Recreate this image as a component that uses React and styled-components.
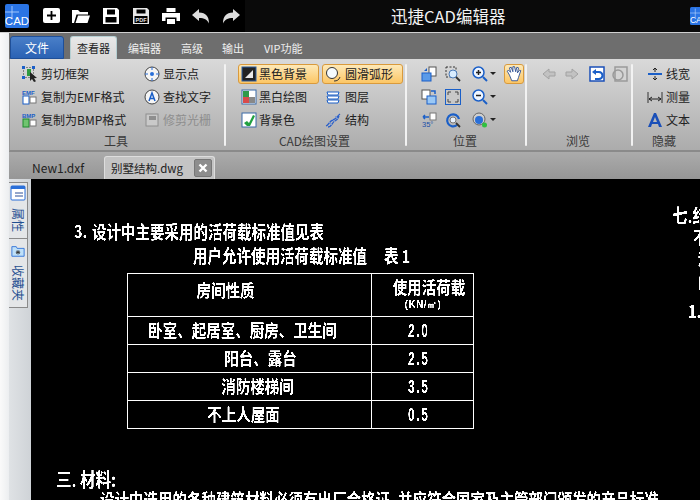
import React from "react";
import styled, { createGlobalStyle } from "styled-components";

const GlobalStyle = createGlobalStyle`
	html, body {
		margin: 0;
		padding: 0;
		background: #000;
	}
	body {
		font-family: "Noto Sans CJK SC", "Liberation Sans", sans-serif;
	}
`;

const Window = styled.div`
	width: 700px;
	height: 500px;
	overflow: hidden;
	display: flex;
	flex-direction: column;
	background: #000;
`;

const TitleBar = styled.div`
	height: 32px;
	flex: none;
	display: flex;
	align-items: center;
	background: #0a0a0a;
	border-bottom: 1px solid #d0d0d0;
	overflow: hidden;
`;

const QuickAccess = styled.div`
	width: 245px;
	height: 100%;
	flex: none;
	display: flex;
	align-items: center;
	background: #000;
	padding-left: 5px;
	box-sizing: border-box;
`;

const Logo = styled.div`
	width: 24px;
	height: 24px;
	margin-right: 13px;
	flex: none;
	svg {
		display: block;
	}
`;

const CornerLogo = styled.div`
	width: 18px;
	height: 18px;
	flex: none;
	margin-left: auto;
	margin-right: -8px;
	svg {
		display: block;
	}
`;

const QuickButton = styled.div`
	width: 18px;
	height: 18px;
	margin-right: 12px;
	flex: none;
	svg {
		display: block;
	}
`;

const AppTitle = styled.div`
	margin-left: 146px;
	color: #f2f2f2;
	font-size: 16.5px;
	white-space: nowrap;
`;

const Body = styled.div`
	flex: 1;
	display: flex;
	min-height: 0;
`;

const WhiteEdge = styled.div`
	width: 9px;
	flex: none;
	background: linear-gradient(90deg, #fafafa, #eceef0);
`;

const Main = styled.div`
	flex: 1;
	min-width: 0;
	display: flex;
	flex-direction: column;
`;

const TabRow = styled.div`
	height: 26px;
	flex: none;
	display: flex;
	align-items: flex-end;
	background: #6e6e6e;
	font-size: 11px;
	color: #eee;
`;

const FileTab = styled.div`
	width: 54px;
	height: 23px;
	margin-left: 1px;
	margin-right: 6px;
	border-radius: 3px 3px 0 0;
	background: linear-gradient(#4a7fc8, #2a62b4);
	border: 1px solid #1f4f98;
	box-sizing: border-box;
	color: #fff;
	font-size: 12px;
	display: flex;
	align-items: center;
	justify-content: center;
`;

const RibbonTab = styled.div`
	height: 23px;
	padding: 0 6px;
	margin-right: ${p => p.$gap ?? 6}px;
	display: flex;
	align-items: center;
	box-sizing: border-box;
	white-space: nowrap;
	border-radius: 3px 3px 0 0;
	color: ${p => (p.$active ? "#222" : "#eee")};
	background: ${p => (p.$active ? "linear-gradient(#e8e8e8, #d8d8d8)" : "transparent")};
	border: ${p => (p.$active ? "1px solid #b5cfd2" : "1px solid transparent")};
	border-bottom: none;
`;

const Ribbon = styled.div`
	height: 93px;
	flex: none;
	display: flex;
	border-left: 1px solid #999;
	border-bottom: 2px solid #8a8a8a;
	box-sizing: border-box;
	background: linear-gradient(#d9d9d9, #acacac);
	font-size: 12px;
	color: #222;
`;

const Group = styled.div`
	width: ${p => p.$width}px;
	flex: none;
	position: relative;
	display: flex;
	flex-direction: column;
	padding-top: 3px;
	box-sizing: border-box;
	&::after {
		content: "";
		position: absolute;
		right: 0;
		top: 5px;
		bottom: 4px;
		width: 2px;
		background: #f2f2f2;
		border-radius: 1px;
		display: ${p => (p.$last ? "none" : "block")};
	}
`;

const GroupBody = styled.div`
	flex: 1;
	display: grid;
	grid-template-columns: ${p => p.$cols};
	grid-auto-rows: 23px;
	padding-left: ${p => p.$pad}px;
`;

const GroupLabel = styled.div`
	height: 18px;
	margin-top: 1px;
	text-align: center;
	font-size: 12px;
	line-height: 18px;
	color: #3a3a3a;
	padding-right: 4px;
`;

const Item = styled.div`
	height: ${p => (p.$on ? 20 : 23)}px;
	width: ${p => (p.$on ? "81px" : "auto")};
	align-self: center;
	display: flex;
	align-items: center;
	gap: ${p => p.$gap ?? 3}px;
	white-space: nowrap;
	box-sizing: border-box;
	margin-left: ${p => (p.$on ? -3 : 0)}px;
	padding-left: ${p => (p.$on ? 2 : 0)}px;
	color: ${p => (p.$off ? "#8e8e8e" : "#222")};
	${p =>
		p.$on &&
		`
		border: 1px solid #d99a3c;
		border-radius: 3px;
		background: linear-gradient(#fde9b8, #fcc665);
	`}
`;

const HandButton = styled.div`
	width: 20px;
	height: 20px;
	align-self: center;
	margin-left: 2px;
	border: 1px solid #d99a3c;
	border-radius: 3px;
	background: linear-gradient(#fde9b8, #fcc665);
	box-sizing: border-box;
	display: flex;
	align-items: center;
	justify-content: center;
`;

const Caret = styled.span`
	width: 0;
	height: 0;
	margin-left: -1px;
	border-left: 3px solid transparent;
	border-right: 3px solid transparent;
	border-top: 3px solid #222;
`;

const DocTabs = styled.div`
	height: 27px;
	flex: none;
	display: flex;
	align-items: flex-end;
	background: linear-gradient(#ababab, #969696);
	font-size: 12px;
	color: #222;
`;

const DocTab = styled.div`
	height: 23px;
	display: flex;
	align-items: center;
	box-sizing: border-box;
	padding-left: ${p => (p.$active ? 6 : 23)}px;
	width: ${p => (p.$active ? "111px" : "95px")};
	border-radius: 3px 3px 0 0;
	white-space: nowrap;
	${p =>
		p.$active &&
		`
		font-size: 11.5px;
		background: #c4c4c4;
		border: 1px solid #ddd;
		border-bottom: none;
	`}
`;

const CloseBox = styled.div`
	width: 18px;
	height: 18px;
	margin-left: auto;
	margin-right: 2px;
	border-radius: 2px;
	border: 1px solid #777;
	background: #8d8d8d;
	box-sizing: border-box;
	display: flex;
	align-items: center;
	justify-content: center;
`;

const Workspace = styled.div`
	flex: 1;
	display: flex;
	min-height: 0;
`;

const SidePanel = styled.div`
	width: 22px;
	flex: none;
	background: linear-gradient(90deg, #dfe2e5, #cfd3d7);
	padding-top: 3px;
	box-sizing: border-box;
`;

const SideTab = styled.div`
	width: 19px;
	height: ${p => p.$height}px;
	border: 1px solid #8a8a8a;
	border-left: none;
	border-top: ${p => (p.$joined ? "none" : "1px solid #8a8a8a")};
	background: #e4e6e8;
	box-sizing: border-box;
	display: flex;
	flex-direction: column;
	align-items: center;
	padding-top: ${p => p.$pad}px;
	gap: 7px;
	color: #1f4e90;
	font-size: 12px;
`;

const SideLabel = styled.span`
	writing-mode: vertical-rl;
	text-orientation: sideways;
	line-height: 14px;
`;

const Canvas = styled.div`
	flex: 1;
	position: relative;
	background: #000;
	overflow: hidden;
	filter: contrast(5);
`;

const Note = styled.div`
	position: absolute;
	left: ${p => p.$x}px;
	top: ${p => p.$y}px;
	color: #fff;
	font-size: ${p => p.$size || 14.5}px;
	font-weight: 700;
	line-height: 1;
	white-space: nowrap;
	transform: scaleY(1.22);
	transform-origin: left top;
`;

const LoadTable = styled.div`
	position: absolute;
	left: 96px;
	top: 94px;
	width: 347px;
	display: grid;
	grid-template-columns: 244px 102px;
	grid-template-rows: 43px 28px 28px 28px 28px;
	border: 1px solid #fff;
	border-bottom: none;
	box-sizing: border-box;
	color: #fff;
	font-size: 14.5px;
	font-weight: 700;
`;

const Cell = styled.div`
	border-bottom: 1px solid #fff;
	border-right: ${p => (p.$first ? "1px solid #fff" : "none")};
	display: flex;
	flex-direction: column;
	align-items: center;
	justify-content: center;
	line-height: 1;
	white-space: nowrap;
	padding-bottom: ${p => (p.$pad ? 9 : 0)}px;
	box-sizing: border-box;
`;

// the drawing's labels are not truly centred in their cells, $shift is the offset from centre
const Squeezed = styled.span`
	display: inline-block;
	margin-left: ${p => (p.$shift || 0) * 2}px;
	transform: scaleY(1.2);
`;

const Value = styled.span`
	display: inline-block;
	margin-right: 8px;
	font: 700 14px/1 "Liberation Sans", sans-serif;
	letter-spacing: 2px;
	transform: scaleX(0.85) scaleY(1.3);
`;

const Unit = styled.span`
	font: 700 10px/1 "Liberation Sans", sans-serif;
	letter-spacing: 0.5px;
	margin-top: 5px;
`;

const IconBox = styled.span`
	width: 16px;
	height: 16px;
	flex: none;
	svg {
		display: block;
	}
`;

const Ico = ({ children, size = 16, view = 16 }) => (
	<svg width={size} height={size} viewBox={`0 0 ${view} ${view}`} fill="none">
		{children}
	</svg>
);

const icons = {
	crop: (
		<Ico>
			<rect x="1.500" y="1.500" width="10" height="10" stroke="#333" strokeDasharray="1 2" />
			<path d="M0 0h3v3H0zM10 0h3v3h-3zM0 10h3v3H0z" fill="#1a5fc8" />
			<rect x="5" y="3" width="4" height="7" fill="#2f9a3f" />
			<path d="M8 6l7 6-3 .3 2 3-2 .7-2-3-2 2z" fill="#222" />
		</Ico>
	),
	target: (
		<Ico>
			<circle cx="8" cy="8" r="7" fill="#f5f5f5" stroke="#444" />
			<circle cx="8" cy="8" r="2" fill="#2a6fd8" />
			<path d="M8 1v3M8 12v3M1 8h3M12 8h3" stroke="#2a6fd8" />
		</Ico>
	),
	emf: (
		<Ico>
			<text x="0" y="5.500" fontSize="6" fontWeight="700" fill="#1a5fc8" fontFamily="Liberation Sans">EMF</text>
			<rect x="1" y="7" width="6" height="8" fill="#fff" stroke="#1a5fc8" />
			<rect x="8" y="8" width="6" height="6" fill="#fff" stroke="#777" />
		</Ico>
	),
	bmp: (
		<Ico>
			<text x="0" y="5.500" fontSize="6" fontWeight="700" fill="#1a5fc8" fontFamily="Liberation Sans">BMP</text>
			<rect x="1" y="7" width="6" height="8" fill="#6fc46f" stroke="#1f8a2f" />
			<rect x="8" y="8" width="6" height="6" fill="#fff" stroke="#777" />
		</Ico>
	),
	findText: (
		<Ico>
			<circle cx="8" cy="8" r="7" fill="#f5f5f5" stroke="#444" />
			<path d="M5 12l3-8 3 8M6 9.500h4" stroke="#1a5fc8" strokeWidth="1.500" />
		</Ico>
	),
	raster: (
		<Ico>
			<rect x="2" y="2" width="12" height="12" fill="#c9c9c9" stroke="#8e8e8e" />
			<rect x="5" y="4" width="7" height="4" fill="#8e8e8e" />
		</Ico>
	),
	blackBg: (
		<Ico>
			<rect x="1" y="1" width="14" height="14" fill="#222" stroke="#2a5fa8" />
			<path d="M4 12L12 4v8z" fill="#e8e8e8" />
		</Ico>
	),
	arc: (
		<Ico>
			<circle cx="7" cy="7" r="5.500" fill="#f5fbff" stroke="#333" />
			<path d="M15 11c-1 3-3 4-6 4" stroke="#333" />
		</Ico>
	),
	monochrome: (
		<Ico>
			<rect x="1" y="1" width="14" height="14" fill="#fff" stroke="#3a6aa8" />
			<path d="M2 2h6v6H2z" fill="#2f9a4a" />
			<path d="M8 8h6v6H8z" fill="#888" />
			<path d="M2 8h6v6H2z" fill="#d84a4a" />
		</Ico>
	),
	layers: (
		<Ico>
			<path d="M2 3h12l-1 3H3zM2 7h12l-1 3H3zM2 11h12l-1 3H3z" fill="#fff" stroke="#1a5fc8" />
		</Ico>
	),
	bgColor: (
		<Ico>
			<rect x="1" y="1" width="14" height="14" fill="#fff" stroke="#3a6aa8" />
			<path d="M3 11l3-2 2 2 4-8 2 1-5 10H6z" fill="#20a040" />
		</Ico>
	),
	dna: (
		<Ico>
			<path d="M1 14c3-1 3-5 7-6s4-4 7-6M3 15c4 0 4-5 7-6s3-3 4-5" stroke="#2a5fc8" strokeWidth="1.300" />
			<path d="M4 10l3 3M7 7l3 3M10 4l3 3" stroke="#7a9ad8" />
		</Ico>
	),
	copyA: (
		<Ico>
			<rect x="8" y="1" width="7" height="9" fill="#fff" stroke="#555" />
			<rect x="1" y="7" width="9" height="8" fill="#5a9ae8" stroke="#1a5fc8" />
			<path d="M3 5l3-3v3z" fill="#1a5fc8" />
		</Ico>
	),
	copyB: (
		<Ico>
			<rect x="1" y="1" width="8" height="9" fill="#fff" stroke="#555" />
			<rect x="6" y="7" width="9" height="8" fill="#9ac8f5" stroke="#1a5fc8" />
			<path d="M10 2h4v3" stroke="#1a5fc8" strokeWidth="1.500" />
		</Ico>
	),
	rotate3d: (
		<Ico>
			<rect x="9" y="1" width="6" height="7" fill="#fff" stroke="#777" />
			<path d="M2 5h6M2 5l2-2M2 5l2 2" stroke="#1a5fc8" strokeWidth="1.500" />
			<text x="1" y="15" fontSize="7.500" fill="#1a4fa8" fontFamily="Liberation Sans">35°</text>
		</Ico>
	),
	zoomRect: (
		<Ico>
			<rect x="1" y="1" width="10" height="10" stroke="#333" strokeDasharray="2 1.500" />
			<circle cx="8" cy="8" r="4" fill="#d8ecff" stroke="#4a7ab8" />
			<path d="M11 11l4 4" stroke="#333" strokeWidth="1.800" />
		</Ico>
	),
	fit: (
		<Ico>
			<rect x="0.500" y="0.500" width="15" height="15" fill="#c8c8c8" stroke="#1a5fc8" />
			<path d="M3 6V3h3M10 3h3v3M13 10v3h-3M6 13H3v-3" stroke="#444" />
		</Ico>
	),
	refresh: (
		<Ico>
			<path d="M12 13A6 6 0 1 1 14 7" stroke="#1a5fc8" strokeWidth="2.200" />
			<circle cx="8" cy="8" r="3" fill="#e8f2ff" stroke="#777" />
			<path d="M11 11l4 4" stroke="#333" strokeWidth="1.800" />
		</Ico>
	),
	zoomIn: (
		<Ico>
			<circle cx="6.500" cy="6.500" r="5.500" fill="#eef5ff" stroke="#1a5fc8" strokeWidth="1.500" />
			<path d="M4 6.500h5M6.500 4v5" stroke="#222" strokeWidth="1.500" />
			<path d="M11 11l4 4" stroke="#1a5fc8" strokeWidth="2" />
		</Ico>
	),
	zoomOut: (
		<Ico>
			<circle cx="6.500" cy="6.500" r="5.500" fill="#eef5ff" stroke="#1a5fc8" strokeWidth="1.500" />
			<path d="M4 6.500h5" stroke="#222" strokeWidth="1.500" />
			<path d="M11 11l4 4" stroke="#1a5fc8" strokeWidth="2" />
		</Ico>
	),
	globe: (
		<Ico>
			<circle cx="7" cy="7" r="6" fill="#cfcfcf" stroke="#666" />
			<circle cx="7" cy="8" r="4" fill="#2a6fd8" />
			<circle cx="12.500" cy="13" r="2.500" fill="#30c040" />
		</Ico>
	),
	back: (
		<Ico>
			<path d="M8 3L2 8l6 5v-3h6V6H8z" fill="#c2c2c2" stroke="#a2a2a2" />
		</Ico>
	),
	forward: (
		<Ico>
			<path d="M8 3l6 5-6 5v-3H2V6h6z" fill="#c2c2c2" stroke="#a2a2a2" />
		</Ico>
	),
	pageBack: (
		<Ico>
			<rect x="1" y="1" width="14" height="14" fill="#fff" stroke="#1a4fb8" strokeWidth="1.500" />
			<path d="M5 6h5a3 3 0 0 1 0 7H6" stroke="#1a5fc8" strokeWidth="2" />
			<path d="M3 6l4-3v6z" fill="#1a5fc8" />
		</Ico>
	),
	pageFwd: (
		<Ico>
			<rect x="3" y="1" width="12" height="14" fill="#d4d4d4" stroke="#9a9a9a" strokeWidth="1.500" />
			<circle cx="6" cy="9" r="5" stroke="#9a9a9a" strokeWidth="1.500" />
		</Ico>
	),
	lineWidth: (
		<Ico>
			<path d="M8 2v4M8 10v4M6 4l2-2 2 2M6 12l2 2 2-2" stroke="#222" />
			<rect x="1" y="7" width="14" height="2" fill="#1a5fc8" />
		</Ico>
	),
	measure: (
		<Ico>
			<path d="M1 3v11M15 3v11" stroke="#333" />
			<path d="M2 10h12M2 10l3-2M2 10l3 2M14 10l-3-2M14 10l-3 2" stroke="#222" />
		</Ico>
	),
	textA: (
		<Ico>
			<path d="M1 15L7 1h2l6 14h-3l-1-3H5l-1 3zM6 10h4L8 5z" fill="#1a4fb8" />
		</Ico>
	),
};

const Drawn = ({ name }) => <IconBox>{icons[name]}</IconBox>;

const Action = ({ icon, label, ...rest }) => (
	<Item {...rest}>
		<Drawn name={icon} />
		{label}
	</Item>
);

const Tool = ({ icon, caret }) => (
	<Item $gap={3}>
		<Drawn name={icon} />
		{caret && <Caret />}
	</Item>
);

const AppMark = ({ size }) => (
	<svg width={size} height={size} viewBox="0 0 24 24">
		<rect width="24" height="24" rx="2" fill="#2a74e4" />
		<path d="M0 8h14M7 2v12" stroke="#bcd8ff" strokeWidth="0.800" />
		<text x="12" y="21" textAnchor="middle" fontSize="11.500" fill="#fff" fontFamily="Liberation Sans">CAD</text>
	</svg>
);

const quickIcons = [
	<g key="new">
		<path d="M3 1h13a2 2 0 0 1 2 2v11a2 2 0 0 1-2 2H3a2 2 0 0 1-2-2V3a2 2 0 0 1 2-2z" fill="#fff" />
		<path d="M9.500 4v9M5 8.500h9" stroke="#000" strokeWidth="1.800" />
	</g>,
	<path key="open" d="M0 16V3h6l2 2h8v2.500H4.500L2 16zM3.500 16L6 8.500h12L15.500 16z" fill="#fff" />,
	<path key="save" d="M1 1h14l2 2v14H1zM5 2.500v5h8v-5zM3.500 10v5.500h11V10z" fill="#fff" fillRule="evenodd" />,
	<g key="pdf">
		<path d="M1 1h14l2 2v14H1zM4.500 2.500v4h9v-4zM2.500 9v7h13V9z" fill="#e8e8e8" fillRule="evenodd" />
		<text x="9" y="15" textAnchor="middle" fontSize="5.500" fontWeight="700" fill="#e8e8e8" fontFamily="Liberation Sans">PDF</text>
	</g>,
	<path key="print" d="M4.500 1h9v4h-9zM0 6h18v8h-3.500v-3.500h-11V14H0zM5 12h8v5H5z" fill="#fff" />,
	<path key="undo" d="M0 8l7-6v3.500c7 0 10 4 10 11-2-4-4.500-5.500-10-5.500V14z" fill="#ddd" />,
	<path key="redo" d="M18 8l-7-6v3.500C4 5.500 1 9.500 1 16.500c2-4 4.500-5.500 10-5.500V14z" fill="#ddd" />,
];

const App = () => {
	return (
		<Window>
			<GlobalStyle />
			<TitleBar>
				<QuickAccess>
					<Logo>
						<AppMark size={24} />
					</Logo>
					{quickIcons.map((icon, i) => (
						<QuickButton key={i}>
							<svg width="18" height="18" viewBox="0 0 18 18">
								{icon}
							</svg>
						</QuickButton>
					))}
				</QuickAccess>
				<AppTitle>迅捷CAD编辑器</AppTitle>
				<CornerLogo>
					<AppMark size={18} />
				</CornerLogo>
			</TitleBar>
			<Body>
				<WhiteEdge />
				<Main>
					<TabRow>
						<FileTab>文件</FileTab>
						<RibbonTab $active $gap={4}>查看器</RibbonTab>
						<RibbonTab>编辑器</RibbonTab>
						<RibbonTab $gap={5}>高级</RibbonTab>
						<RibbonTab>输出</RibbonTab>
						<RibbonTab>VIP功能</RibbonTab>
					</TabRow>
					<Ribbon>
						<Group $width={216}>
							<GroupBody $cols="122px 1fr" $pad={12}>
								<Action icon="crop" label="剪切框架" />
								<Action icon="target" label="显示点" />
								<Action icon="emf" label="复制为EMF格式" />
								<Action icon="findText" label="查找文字" />
								<Action icon="bmp" label="复制为BMP格式" />
								<Action icon="raster" label="修剪光栅" $off />
							</GroupBody>
							<GroupLabel>工具</GroupLabel>
						</Group>
						<Group $width={181}>
							<GroupBody $cols="84px 1fr" $pad={15}>
								<Action icon="blackBg" label="黑色背景" $on $gap={2} />
								<Action icon="arc" label="圆滑弧形" $on $gap={4} />
								<Action icon="monochrome" label="黑白绘图" $gap={2} />
								<Action icon="layers" label="图层" $gap={4} />
								<Action icon="bgColor" label="背景色" $gap={2} />
								<Action icon="dna" label="结构" $gap={4} />
							</GroupBody>
							<GroupLabel>CAD绘图设置</GroupLabel>
						</Group>
						<Group $width={120}>
							<GroupBody $cols="24px 27px 30px 1fr" $pad={14}>
								<Tool icon="copyA" />
								<Tool icon="zoomRect" />
								<Tool icon="zoomIn" caret />
								<HandButton>
									<svg width="18" height="18" viewBox="0 0 16 16" fill="none">
										<path d="M4 9L2 5.500l1-1 2 2L4 2.500l1.500-.5L7 6V1.500h1.500L9.500 6l1-4 1.500.5L11 7l2-2.500 1 .5-2 6-1 3H6z" fill="#fff" stroke="#2a4f98" strokeWidth="0.800" />
									</svg>
								</HandButton>
								<Tool icon="copyB" />
								<Tool icon="fit" />
								<Tool icon="zoomOut" caret />
								<span />
								<Tool icon="rotate3d" />
								<Tool icon="refresh" />
								<Tool icon="globe" caret />
							</GroupBody>
							<GroupLabel>位置</GroupLabel>
						</Group>
						<Group $width={106}>
							<GroupBody $cols="23px 25px 23px 1fr" $pad={14}>
								<Tool icon="back" />
								<Tool icon="forward" />
								<Tool icon="pageBack" />
								<Tool icon="pageFwd" />
							</GroupBody>
							<GroupLabel>浏览</GroupLabel>
						</Group>
						<Group $width={66} $last>
							<GroupBody $cols="1fr" $pad={14}>
								<Action icon="lineWidth" label="线宽" />
								<Action icon="measure" label="测量" />
								<Action icon="textA" label="文本" />
							</GroupBody>
							<GroupLabel>隐藏</GroupLabel>
						</Group>
					</Ribbon>
					<DocTabs>
						<DocTab>New1.dxf</DocTab>
						<DocTab $active>
							别墅结构.dwg
							<CloseBox>
								<svg width="10" height="10" viewBox="0 0 10 10">
									<path d="M1.500 1.500l7 7M8.500 1.500l-7 7" stroke="#fff" strokeWidth="2.400" />
								</svg>
							</CloseBox>
						</DocTab>
					</DocTabs>
					<Workspace>
						<SidePanel>
							<SideTab $height={57} $pad={2}>
								<svg width="16" height="16" viewBox="0 0 16 16" fill="none">
									<rect x="1" y="1" width="14" height="14" rx="1" fill="#fff" stroke="#2a6fd8" />
									<rect x="1" y="1" width="14" height="3" fill="#2a6fd8" />
									<path d="M5 8h8M5 11h8" stroke="#2a4f98" />
								</svg>
								<SideLabel>属性</SideLabel>
							</SideTab>
							<SideTab $height={69} $pad={5} $joined>
								<svg width="14" height="14" viewBox="0 0 16 16" fill="none">
									<path d="M1 3h5l1 2h8v9H1z" fill="#bfe0f8" stroke="#2a6fd8" />
									<path d="M8 7v5M5.500 9.500h5M6 8l4 3M10 8l-4 3" stroke="#333" />
								</svg>
								<SideLabel>收藏夹</SideLabel>
							</SideTab>
						</SidePanel>
						<Canvas>
							<Note $x={43} $y={43}>3.</Note>
							<Note $x={61} $y={44}>设计中主要采用的活荷载标准值见表</Note>
							<Note $x={162} $y={68}>用户允许使用活荷载标准值</Note>
							<Note $x={353} $y={68}>表 1</Note>
							<LoadTable>
								<Cell $first $pad><Squeezed $shift={-24}>房间性质</Squeezed></Cell>
								<Cell>
									<Squeezed $shift={6}>使用活荷载</Squeezed>
									<Unit>(KN/㎡)</Unit>
								</Cell>
								<Cell $first><Squeezed $shift={-7}>卧室、起居室、厨房、卫生间</Squeezed></Cell>
								<Cell><Value>2.0</Value></Cell>
								<Cell $first><Squeezed $shift={11}>阳台、露台</Squeezed></Cell>
								<Cell><Value>2.5</Value></Cell>
								<Cell $first><Squeezed $shift={8}>消防楼梯间</Squeezed></Cell>
								<Cell><Value>3.5</Value></Cell>
								<Cell $first><Squeezed $shift={-6}>不上人屋面</Squeezed></Cell>
								<Cell><Value>0.5</Value></Cell>
							</LoadTable>
							<Note $x={25} $y={291} $size={15.5}>三. 材料:</Note>
							<Note $x={69} $y={312}>设计中选用的各种建筑材料必须有出厂合格证, 并应符合国家及主管部门颁发的产品标准</Note>
							<Note $x={641} $y={27} $size={15.5}>七.结</Note>
							<Note $x={662} $y={49}>不</Note>
							<Note $x={667} $y={70}>规</Note>
							<Note $x={667} $y={93}>门</Note>
							<Note $x={657} $y={123}>1.</Note>
						</Canvas>
					</Workspace>
				</Main>
			</Body>
		</Window>
	);
};

export default App;
